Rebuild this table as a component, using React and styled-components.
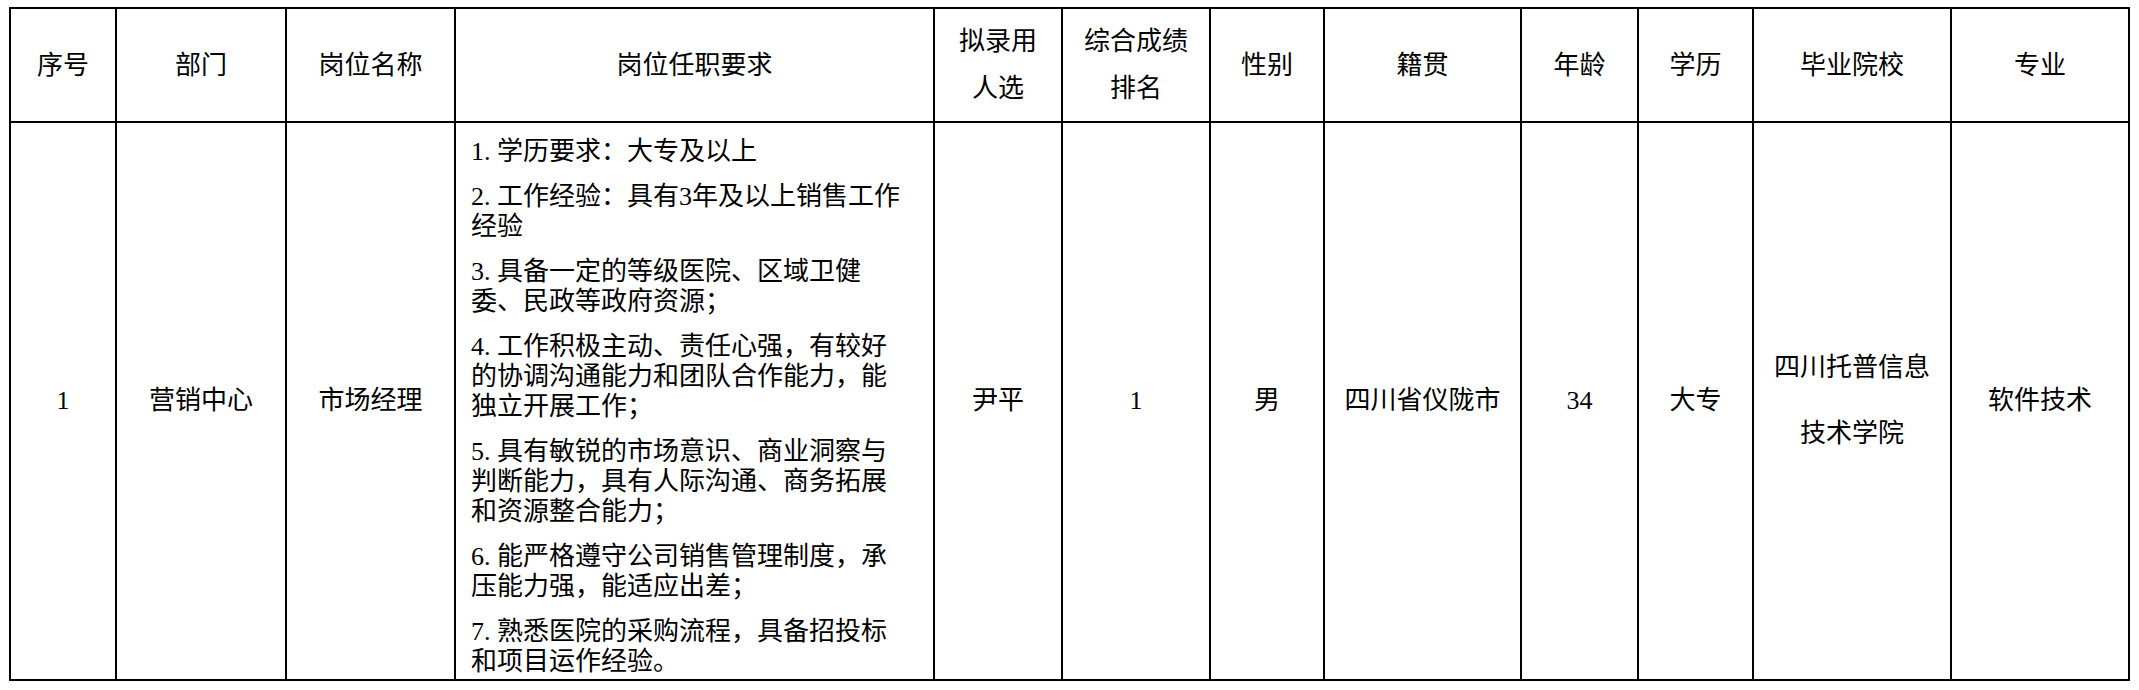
import styled, { createGlobalStyle } from "styled-components";

const GlobalStyle = createGlobalStyle`
  html, body {
    margin: 0;
    padding: 0;
    background: #ffffff;
  }
  body {
    font-family: "Liberation Serif", "Noto Sans CJK SC", serif;
    color: #000000;
  }
`;

const Page = styled.div`
  padding: 7px 0 0 9px;
`;

const Sheet = styled.table`
  border-collapse: collapse;
  table-layout: fixed;
  width: 2121px;
  font-size: 26px;
  font-weight: 400;
`;

const HeadRow = styled.tr`
  height: 114px;
`;

const BodyRow = styled.tr`
  height: 558px;
`;

const HeadCell = styled.th`
  border: 2px solid #000;
  padding: 0;
  font-weight: 400;
  text-align: center;
  vertical-align: middle;
  white-space: nowrap;
`;

const Cell = styled.td`
  border: 2px solid #000;
  padding: ${(props) => (props.$duties ? "14px 8px 0 15px" : "0")};
  text-align: ${(props) => (props.$duties ? "left" : "center")};
  vertical-align: ${(props) => (props.$duties ? "top" : "middle")};
  white-space: nowrap;
`;

const Stacked = styled.div`
  display: flex;
  flex-direction: column;
  align-items: center;
  line-height: ${(props) => props.$pitch}px;
`;

const DutyList = styled.div`
  display: flex;
  flex-direction: column;
  gap: 15px;
`;

const Duty = styled.div`
  display: flex;
  flex-direction: column;
  line-height: 30px;
`;

const columns = [
  { key: "seq", title: ["序号"], width: 106 },
  { key: "dept", title: ["部门"], width: 170 },
  { key: "post", title: ["岗位名称"], width: 169 },
  { key: "duties", title: ["岗位任职要求"], width: 479 },
  { key: "person", title: ["拟录用", "人选"], width: 128 },
  { key: "rank", title: ["综合成绩", "排名"], width: 148 },
  { key: "gender", title: ["性别"], width: 114 },
  { key: "origin", title: ["籍贯"], width: 197 },
  { key: "age", title: ["年龄"], width: 117 },
  { key: "edu", title: ["学历"], width: 115 },
  { key: "school", title: ["毕业院校"], width: 198 },
  { key: "major", title: ["专业"], width: 178 },
];

const row = {
  seq: ["1"],
  dept: ["营销中心"],
  post: ["市场经理"],
  duties: [
    ["1. 学历要求：大专及以上"],
    ["2. 工作经验：具有3年及以上销售工作", "经验"],
    ["3. 具备一定的等级医院、区域卫健", "委、民政等政府资源；"],
    [
      "4. 工作积极主动、责任心强，有较好",
      "的协调沟通能力和团队合作能力，能",
      "独立开展工作；",
    ],
    [
      "5. 具有敏锐的市场意识、商业洞察与",
      "判断能力，具有人际沟通、商务拓展",
      "和资源整合能力；",
    ],
    ["6. 能严格遵守公司销售管理制度，承", "压能力强，能适应出差；"],
    ["7. 熟悉医院的采购流程，具备招投标", "和项目运作经验。"],
  ],
  person: ["尹平"],
  rank: ["1"],
  gender: ["男"],
  origin: ["四川省仪陇市"],
  age: ["34"],
  edu: ["大专"],
  school: ["四川托普信息", "技术学院"],
  major: ["软件技术"],
};

function App() {
  return (
    <>
      <GlobalStyle />
      <Page>
        <Sheet>
          <colgroup>
            {columns.map((col) => (
              <col key={col.key} style={{ width: col.width }} />
            ))}
          </colgroup>
          <thead>
            <HeadRow>
              {columns.map((col) => (
                <HeadCell key={col.key}>
                  <Stacked $pitch={47}>
                    {col.title.map((t) => (
                      <span key={t}>{t}</span>
                    ))}
                  </Stacked>
                </HeadCell>
              ))}
            </HeadRow>
          </thead>
          <tbody>
            <BodyRow>
              {columns.map((col) =>
                col.key === "duties" ? (
                  <Cell key={col.key} $duties>
                    <DutyList>
                      {row.duties.map((lines, i) => (
                        <Duty key={i}>
                          {lines.map((l) => (
                            <span key={l}>{l}</span>
                          ))}
                        </Duty>
                      ))}
                    </DutyList>
                  </Cell>
                ) : (
                  <Cell key={col.key}>
                    <Stacked $pitch={66}>
                      {row[col.key].map((t) => (
                        <span key={t}>{t}</span>
                      ))}
                    </Stacked>
                  </Cell>
                )
              )}
            </BodyRow>
          </tbody>
        </Sheet>
      </Page>
    </>
  );
}

export default App;
